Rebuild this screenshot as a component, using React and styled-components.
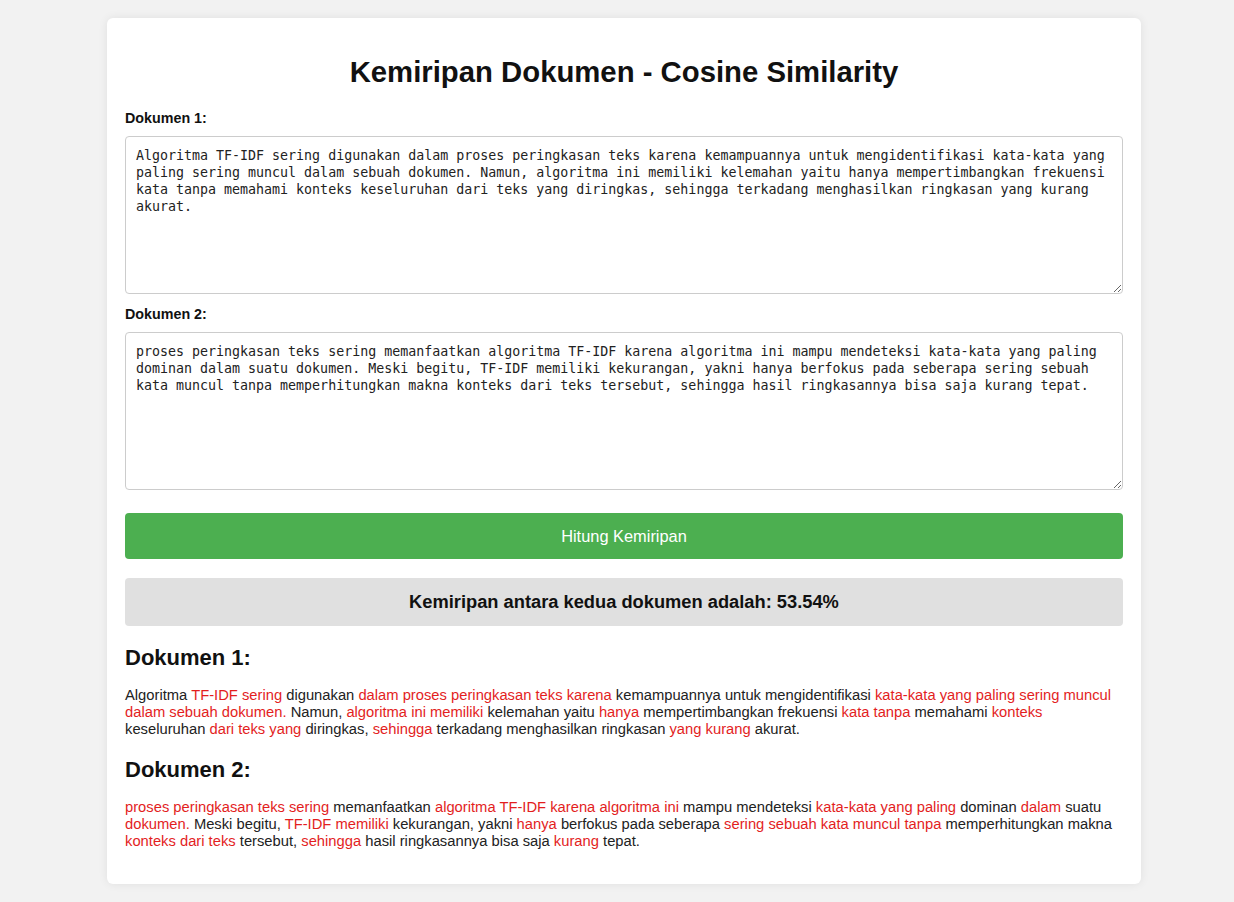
import React from 'react';
import styled, { createGlobalStyle } from 'styled-components';

const GlobalStyle = createGlobalStyle`
  body {
    margin: 0;
    background: #f2f2f2;
    font-family: 'Liberation Sans', Arial, sans-serif;
    color: #222;
  }
`;

const Page = styled.div`
  padding: 18px 0 18px 14px;
  display: flex;
  justify-content: center;
`;

const Container = styled.div`
  width: 1034px;
  box-sizing: border-box;
  background: #fff;
  border-radius: 6px;
  box-shadow: 0 0 10px rgba(0, 0, 0, 0.08);
  padding: 38px 18px 34px;
`;

const Title = styled.h1`
  margin: 0 0 22px;
  font-size: 29.3px;
  line-height: 32px;
  text-align: center;
  color: #111;
`;

const Label = styled.label`
  display: block;
  font-size: 14.3px;
  line-height: 16px;
  font-weight: bold;
  color: #111;
  margin-bottom: 10px;
`;

const TextArea = styled.textarea`
  display: block;
  width: 100%;
  height: 158px;
  box-sizing: border-box;
  margin: 0 0 12px;
  padding: 10px;
  border: 1px solid #ccc;
  border-radius: 4px;
  font-family: 'DejaVu Sans Mono', 'Liberation Mono', monospace;
  font-size: 13.3px;
  line-height: 17px;
  color: #222;
  resize: vertical;
  outline: none;
`;

const Button = styled.button`
  display: block;
  width: 100%;
  height: 46px;
  margin: 23px 0 19px;
  border: none;
  border-radius: 4px;
  background: #4caf50;
  color: #fff;
  font-family: 'Liberation Sans', Arial, sans-serif;
  font-size: 16.4px;
  cursor: pointer;
`;

const Result = styled.div`
  height: 48px;
  display: flex;
  align-items: center;
  justify-content: center;
  background: #e0e0e0;
  border-radius: 4px;
  font-size: 18.3px;
  font-weight: bold;
  color: #111;
`;

const DocHeading = styled.h2`
  margin: 19px 0 17px;
  font-size: 22px;
  line-height: 25px;
  color: #111;
`;

const Paragraph = styled.p`
  margin: 0;
  font-size: 14.75px;
  line-height: 17px;
  color: #222;
`;

const Mark = styled.span`
  color: #e31e1e;
`;

const doc1 =
  'Algoritma TF-IDF sering digunakan dalam proses peringkasan teks karena kemampuannya untuk mengidentifikasi kata-kata yang paling sering muncul dalam sebuah dokumen. Namun, algoritma ini memiliki kelemahan yaitu hanya mempertimbangkan frekuensi kata tanpa memahami konteks keseluruhan dari teks yang diringkas, sehingga terkadang menghasilkan ringkasan yang kurang akurat.';

const doc2 =
  'proses peringkasan teks sering memanfaatkan algoritma TF-IDF karena algoritma ini mampu mendeteksi kata-kata yang paling dominan dalam suatu dokumen. Meski begitu, TF-IDF memiliki kekurangan, yakni hanya berfokus pada seberapa sering sebuah kata muncul tanpa memperhitungkan makna konteks dari teks tersebut, sehingga hasil ringkasannya bisa saja kurang tepat.';

// [text, highlighted]
const highlighted1 = [
  ['Algoritma ', false],
  ['TF-IDF sering', true],
  [' digunakan ', false],
  ['dalam proses peringkasan teks karena', true],
  [' kemampuannya untuk mengidentifikasi ', false],
  ['kata-kata yang paling sering muncul dalam sebuah dokumen.', true],
  [' Namun, ', false],
  ['algoritma ini memiliki', true],
  [' kelemahan yaitu ', false],
  ['hanya', true],
  [' mempertimbangkan frekuensi ', false],
  ['kata tanpa', true],
  [' memahami ', false],
  ['konteks', true],
  [' keseluruhan ', false],
  ['dari teks yang', true],
  [' diringkas, ', false],
  ['sehingga', true],
  [' terkadang menghasilkan ringkasan ', false],
  ['yang kurang', true],
  [' akurat.', false],
];

const highlighted2 = [
  ['proses peringkasan teks sering', true],
  [' memanfaatkan ', false],
  ['algoritma TF-IDF karena algoritma ini', true],
  [' mampu mendeteksi ', false],
  ['kata-kata yang paling', true],
  [' dominan ', false],
  ['dalam', true],
  [' suatu ', false],
  ['dokumen.', true],
  [' Meski begitu, ', false],
  ['TF-IDF memiliki', true],
  [' kekurangan, yakni ', false],
  ['hanya', true],
  [' berfokus pada seberapa ', false],
  ['sering sebuah kata muncul tanpa', true],
  [' memperhitungkan makna ', false],
  ['konteks dari teks', true],
  [' tersebut, ', false],
  ['sehingga', true],
  [' hasil ringkasannya bisa saja ', false],
  ['kurang', true],
  [' tepat.', false],
];

const Highlighted = ({ parts }) => (
  <Paragraph>
    {parts.map(([text, hit], i) => (hit ? <Mark key={i}>{text}</Mark> : <React.Fragment key={i}>{text}</React.Fragment>))}
  </Paragraph>
);

export default function App() {
  return (
    <>
      <GlobalStyle />
      <Page>
        <Container>
          <Title>Kemiripan Dokumen - Cosine Similarity</Title>
          <Label htmlFor="doc1">Dokumen 1:</Label>
          <TextArea id="doc1" defaultValue={doc1} spellCheck={false} />
          <Label htmlFor="doc2">Dokumen 2:</Label>
          <TextArea id="doc2" defaultValue={doc2} spellCheck={false} />
          <Button>Hitung Kemiripan</Button>
          <Result>Kemiripan antara kedua dokumen adalah: 53.54%</Result>
          <DocHeading>Dokumen 1:</DocHeading>
          <Highlighted parts={highlighted1} />
          <DocHeading>Dokumen 2:</DocHeading>
          <Highlighted parts={highlighted2} />
        </Container>
      </Page>
    </>
  );
}
